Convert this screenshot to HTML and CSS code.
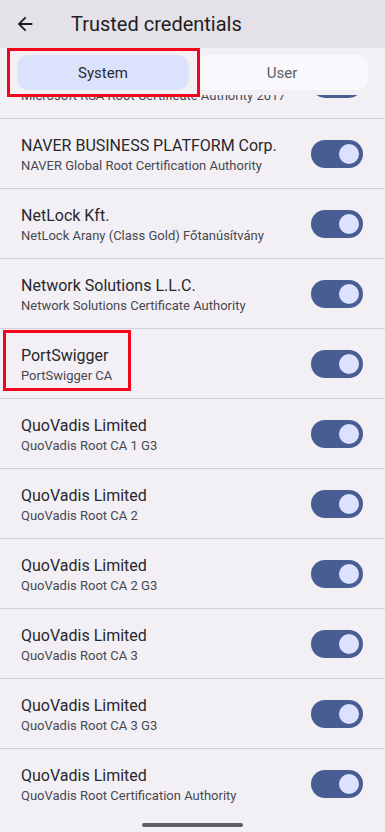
FILE: index.html
```html
<!DOCTYPE html>
<html lang="en">
<head>
<meta charset="utf-8">
<title>Trusted credentials</title>
<link rel="stylesheet" href="styles.css">
</head>
<body>
<div class="screen">
  <header class="appbar">
    <span class="back">
      <svg width="22" height="22" viewBox="0 0 24 24"><path d="M20 11H7.83l5.59-5.59L12 4l-8 8 8 8 1.41-1.41L7.83 13H20v-2z" fill="#1c1b1f"/></svg>
    </span>
    <h1 class="title">Trusted credentials</h1>
  </header>
  <div class="tabs">
    <div class="tab active">System</div>
    <div class="tab">User</div>
    <div class="mark mark-tab"></div>
  </div>
  <div class="viewport">
    <ul class="list">
      <li class="row"><div class="text"><div class="name">Microsoft Corporation</div><div class="sub">Microsoft RSA Root Certificate Authority 2017</div></div><span class="switch"><span class="thumb"></span></span></li>
      <li class="row"><div class="text"><div class="name">NAVER BUSINESS PLATFORM Corp.</div><div class="sub">NAVER Global Root Certification Authority</div></div><span class="switch"><span class="thumb"></span></span></li>
      <li class="row"><div class="text"><div class="name">NetLock Kft.</div><div class="sub">NetLock Arany (Class Gold) Főtanúsítvány</div></div><span class="switch"><span class="thumb"></span></span></li>
      <li class="row"><div class="text"><div class="name">Network Solutions L.L.C.</div><div class="sub">Network Solutions Certificate Authority</div></div><span class="switch"><span class="thumb"></span></span></li>
      <li class="row"><div class="text"><div class="name">PortSwigger</div><div class="sub">PortSwigger CA</div></div><span class="switch"><span class="thumb"></span></span><div class="mark mark-row"></div></li>
      <li class="row"><div class="text"><div class="name">QuoVadis Limited</div><div class="sub">QuoVadis Root CA 1 G3</div></div><span class="switch"><span class="thumb"></span></span></li>
      <li class="row"><div class="text"><div class="name">QuoVadis Limited</div><div class="sub">QuoVadis Root CA 2</div></div><span class="switch"><span class="thumb"></span></span></li>
      <li class="row"><div class="text"><div class="name">QuoVadis Limited</div><div class="sub">QuoVadis Root CA 2 G3</div></div><span class="switch"><span class="thumb"></span></span></li>
      <li class="row"><div class="text"><div class="name">QuoVadis Limited</div><div class="sub">QuoVadis Root CA 3</div></div><span class="switch"><span class="thumb"></span></span></li>
      <li class="row"><div class="text"><div class="name">QuoVadis Limited</div><div class="sub">QuoVadis Root CA 3 G3</div></div><span class="switch"><span class="thumb"></span></span></li>
      <li class="row last"><div class="text"><div class="name">QuoVadis Limited</div><div class="sub">QuoVadis Root Certification Authority</div></div><span class="switch"><span class="thumb"></span></span></li>
    </ul>
  </div>
  <div class="gesture"></div>
</div>
</body>
</html>
```

FILE: styles.css
```css
* { box-sizing: border-box; }
html, body { margin: 0; padding: 0; }
body {
  width: 385px;
  height: 832px;
  overflow: hidden;
  background: #f2f0f5;
  font-family: Roboto, "Noto Sans", "Liberation Sans", sans-serif;
  color: #1c1b1f;
}
.screen {
  position: relative;
  width: 385px;
  height: 832px;
  display: flex;
  flex-direction: column;
  overflow: hidden;
}
.appbar {
  height: 48px;
  flex: none;
  background: #e4e2e8;
  display: flex;
  align-items: center;
}
.back {
  width: 22px;
  height: 22px;
  margin-left: 14px;
  display: flex;
}
.title {
  margin: 0 0 1px 35px;
  font-size: 20px;
  font-weight: 400;
  color: #1f1e23;
}
.tabs {
  position: relative;
  z-index: 2;
  flex: none;
  height: 47px;
  padding: 7px 17px 5px 17px;
  display: flex;
  gap: 7px;
  background: #f2f0f5;
}
.tab {
  flex: 1;
  height: 35px;
  border-radius: 12px;
  background: #f9f8fc;
  display: flex;
  align-items: center;
  justify-content: center;
  font-size: 15px;
  color: #5d5e66;
}
.tab.active {
  background: #dae2fc;
  color: #2a2b31;
}
.mark {
  position: absolute;
  border: 3px solid #f5051c;
  pointer-events: none;
}
.mark-tab {
  left: 7px;
  top: 0;
  width: 193px;
  height: 49px;
}
.viewport {
  flex: 1;
  overflow: hidden;
  position: relative;
  z-index: 1;
}
.list {
  list-style: none;
  margin: -46px 0 0 0;
  padding: 0;
}
.row {
  position: relative;
  height: 70px;
  border-bottom: 1px solid #d3d1d7;
  display: flex;
  align-items: center;
  padding: 0 22px 0 21px;
}
.row.last { border-bottom: none; }
.text {
  flex: 1;
  min-width: 0;
  padding-top: 3px;
}
.name {
  font-size: 16px;
  line-height: 20px;
  color: #28272c;
}
.sub {
  font-size: 13px;
  line-height: 19px;
  color: #48484f;
}
.switch {
  flex: none;
  width: 52px;
  height: 28px;
  border-radius: 14px;
  background: #485d92;
  display: flex;
  align-items: center;
  justify-content: flex-end;
  padding-right: 4px;
}
.thumb {
  width: 20px;
  height: 20px;
  border-radius: 50%;
  background: #dbe1ff;
}
.mark-row {
  left: 3px;
  top: 1px;
  width: 128px;
  height: 61px;
}
.gesture {
  position: absolute;
  left: 142px;
  bottom: 5px;
  width: 101px;
  height: 4px;
  border-radius: 2px;
  background: #5f5f63;
  z-index: 3;
}
```
